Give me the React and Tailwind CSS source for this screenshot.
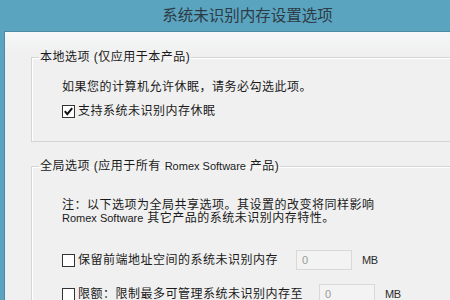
import React from "react";

const font = { fontFamily: '"Liberation Sans", "Noto Sans CJK SC", sans-serif' };

// latin words in the dialog use a smaller font than the chinese text
function Latin({ children }) {
    return <span className="text-[11px] tracking-normal">{children}</span>;
}

function CheckBox({ checked }) {
    return (
        <span className="w-[13px] h-[13px] border border-[#333333] bg-white flex items-center justify-center shrink-0">
            {checked && (
                <svg width="11" height="11" viewBox="0 0 11 11">
                    <path d="M1.8 5.2 L4.3 8.2 L9.2 2.2" fill="none" stroke="#111111" strokeWidth="2" />
                </svg>
            )}
        </span>
    );
}

function Group({ title, children, className }) {
    return (
        <fieldset className={"border border-[#d5d5d5] border-r-0 shadow-[inset_1px_1px_0_#ffffff] " + className}>
            <legend className="ml-[7px] px-[1px] text-[12px] tracking-[0.5px] leading-[16px] text-[#1a1a1a]">{title}</legend>
            {children}
        </fieldset>
    );
}

function NumRow({ label, boxGap }) {
    return (
        <div className="flex items-center h-[20px]">
            <CheckBox />
            <span className="ml-[3px] text-[12px] tracking-[0.5px] leading-[16px] text-[#1a1a1a]">{label}</span>
            <div className={"h-[20px] w-[56px] border border-[#d9d9d9] bg-[#f3f3f3] flex items-center pl-[5px] text-[11px] text-[#9a9a9a] " + boxGap}>0</div>
            <span className="ml-[10px] text-[11px] text-[#2a2a2a] tracking-[-0.5px]">MB</span>
        </div>
    );
}

export default function App() {
    return (
        <div className="w-[450px] h-[300px] bg-[#5ba4bf] overflow-hidden flex flex-col" style={font}>
            <div className="h-[31px] shrink-0 flex items-center justify-center pl-[45px] text-[15.5px] text-[#2c3b44]">
                系统未识别内存设置选项
            </div>
            <div className="flex-1 ml-[4px] border-t border-l border-[#4a8aa2] bg-gradient-to-b from-[#f5f8f8] to-[#f0f0f0] to-[20px] pl-[26px] pt-[17px]">
                <Group title="本地选项 (仅应用于本产品)" className="pb-[22px]">
                    <div className="pl-[30px] pt-[14px] flex flex-col gap-[8px] text-[12px] tracking-[0.5px] leading-[16px] text-[#1a1a1a]">
                        <div>如果您的计算机允许休眠，请务必勾选此项。</div>
                        <div className="flex items-center">
                            <CheckBox checked />
                            <span className="ml-[3px]">支持系统未识别内存休眠</span>
                        </div>
                    </div>
                </Group>
                <Group title={<>全局选项 (应用于所有 <Latin>Romex Software</Latin> 产品)</>} className="mt-[16px] pb-[20px]">
                    <div className="pl-[30px] pt-[25px]">
                        <div className="text-[12px] tracking-[0.5px] leading-[12px] text-[#1a1a1a] flex flex-col gap-[1px]">
                            <div>注：以下选项为全局共享选项。其设置的改变将同样影响</div>
                            <div><Latin>Romex Software</Latin> 其它产品的系统未识别内存特性。</div>
                        </div>
                        <div className="mt-[26px] flex flex-col gap-[14px]">
                            <NumRow label="保留前端地址空间的系统未识别内存" boxGap="ml-[18px]" />
                            <NumRow label="限额：限制最多可管理系统未识别内存至" boxGap="ml-[16px]" />
                        </div>
                    </div>
                </Group>
            </div>
        </div>
    );
}
